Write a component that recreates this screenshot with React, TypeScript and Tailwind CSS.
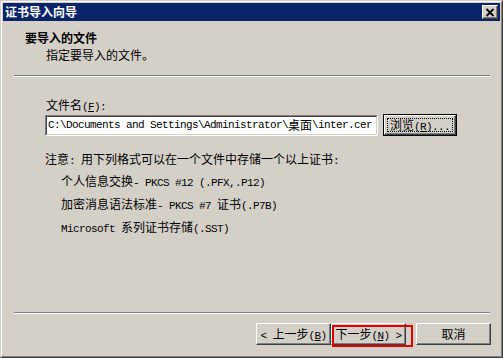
import React from 'react';

// ASCII runs are set in a half-width mono face, CJK runs in Noto Sans CJK
function Txt({ s }: { s: string }) {
  const parts = s.split(/([\u0000-\u00ff]+)/).filter(Boolean);
  return (
    <>
      {parts.map((p, i) =>
        /^[\u0000-\u00ff]+$/.test(p) ? (
          <span key={i} className="font-['Liberation_Mono',monospace] text-[11px] leading-[14px] tracking-[-0.6px] whitespace-pre">
            {p}
          </span>
        ) : (
          <span key={i}>{p}</span>
        )
      )}
    </>
  );
}

function Mn({ before, k, after }: { before: string; k: string; after: string }) {
  return (
    <>
      <Txt s={before} />
      <u className="underline-offset-1">
        <Txt s={k} />
      </u>
      <Txt s={after} />
    </>
  );
}

function Btn({ children, className = '' }: { children: React.ReactNode; className?: string }) {
  return (
    <div
      className={`h-[22px] w-[75px] flex items-center justify-center border border-t-white border-l-white border-r-[#404040] border-b-[#404040] shadow-[inset_-1px_-1px_#808080] bg-[#d4d0c8] ${className}`}
    >
      <div className="h-[14px] leading-[14px]">{children}</div>
    </div>
  );
}

function Separator() {
  return <div className="ml-[11px] mr-[10px] h-[2px] border-t border-t-[#808080] border-b border-b-white" />;
}

export default function App() {
  return (
    <div className="w-[503px] h-[358px] bg-[#d4d0c8] border border-t-[#d4d0c8] border-l-[#d4d0c8] border-r-[#404040] border-b-[#404040] font-['Noto_Sans_CJK_SC',sans-serif] text-[12px] leading-[14px] text-black">
      <div className="h-full border border-t-white border-l-white border-r-[#808080] border-b-[#808080] p-px flex flex-col">
        {/* Title bar */}
        <div className="h-[18px] bg-[#0a246a] flex items-center justify-between pl-[2px] pr-[2px] shrink-0">
          <span className="text-white font-bold text-[12px]">证书导入向导</span>
          <div className="w-[16px] h-[14px] bg-[#d4d0c8] border border-t-white border-l-white border-r-[#404040] border-b-[#404040] shadow-[inset_-1px_-1px_#808080] flex items-center justify-center">
            <svg width="10" height="9" viewBox="0 0 10 9">
              <path d="M1.5 1 L8.5 8 M8.5 1 L1.5 8" stroke="#000" strokeWidth="1.8" fill="none" />
            </svg>
          </div>
        </div>

        {/* Header */}
        <div className="h-[54px] shrink-0 pt-[10px]">
          <div className="h-[14px] pl-[22px] font-bold">要导入的文件</div>
          <div className="h-[14px] pl-[43px] mt-[3px]">指定要导入的文件。</div>
        </div>
        <Separator />

        {/* Body */}
        <div className="flex-1 pl-[42px] pt-[21px]">
          <div className="h-[14px] pl-[1px]">
            <Mn before="文件名(" k="F" after="):" />
          </div>
          <div className="mt-[2px] flex items-center gap-[5px]">
            <div className="w-[333px] h-[21px] border border-t-[#808080] border-l-[#808080] border-r-white border-b-white">
              <div className="h-full bg-white border border-t-[#404040] border-l-[#404040] border-r-[#d4d0c8] border-b-[#d4d0c8] flex items-center pl-[1px] overflow-hidden whitespace-nowrap">
                <Txt s="C:\Documents and Settings\Administrator\桌面\inter.cer" />
              </div>
            </div>
            <div className="w-[74px] h-[22px] border border-black">
              <div className="h-full border border-t-white border-l-white border-r-[#404040] border-b-[#404040] shadow-[inset_-1px_-1px_#808080] p-[2px]">
                <div className="h-full border border-dotted border-black flex items-center justify-center">
                  <div className="h-[14px]">
                    <Mn before="浏览(" k="R" after=")..." />
                  </div>
                </div>
              </div>
            </div>
          </div>
          <div className="h-[14px] mt-[16px]">
            <Txt s="注意: 用下列格式可以在一个文件中存储一个以上证书:" />
          </div>
          <div className="pl-[16px] mt-[8px] flex flex-col gap-[9px]">
            <div className="h-[14px]">
              <Txt s="个人信息交换- PKCS #12 (.PFX,.P12)" />
            </div>
            <div className="h-[14px]">
              <Txt s="加密消息语法标准- PKCS #7 证书(.P7B)" />
            </div>
            <div className="h-[14px]">
              <Txt s="Microsoft 系列证书存储(.SST)" />
            </div>
          </div>
        </div>
        <Separator />

        {/* Buttons */}
        <div className="h-[41px] shrink-0 flex items-start justify-end pt-[9px] pr-[9px]">
          <Btn>
            <Mn before="< 上一步(" k="B" after=")" />
          </Btn>
          <div className="relative">
            <Btn>
              <Mn before="下一步(" k="N" after=") >" />
            </Btn>
            <div className="absolute left-[1px] top-[2px] w-[81px] h-[22px] border-2 border-[#e00000]" />
          </div>
          <Btn className="ml-[10px]">取消</Btn>
        </div>
      </div>
    </div>
  );
}
